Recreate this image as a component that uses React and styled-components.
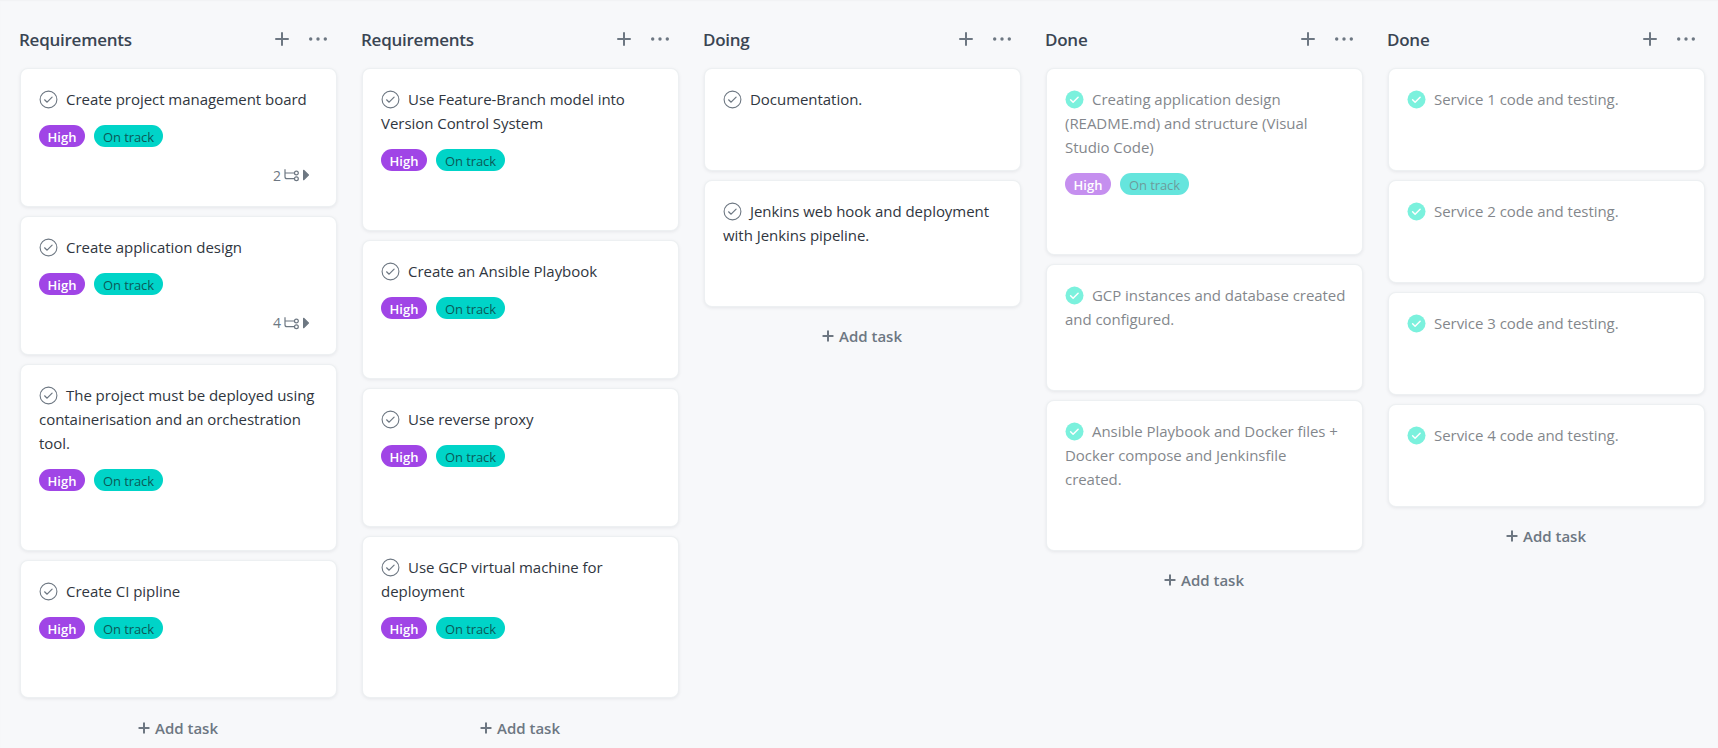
import React from "react";
import styled, { createGlobalStyle } from "styled-components";

const GlobalStyle = createGlobalStyle`
  * { box-sizing: border-box; }
  body {
    margin: 0;
    background: #f7f8fa;
    font-family: "Segoe UI", "Open Sans", "Noto Sans", sans-serif;
    color: #303640;
  }
`;

const Board = styled.main`
  display: flex;
  gap: 27px;
  height: 748px;
  padding: 19px 14px 0 21px;
  overflow: hidden;
  background: #f7f8fa;
  box-shadow: inset 0 1px 1px #f1f2f4;
`;

const Column = styled.section`
  flex: 0 0 315px;
  display: flex;
  flex-direction: column;
`;

const ColumnHeader = styled.header`
  display: flex;
  align-items: center;
  height: 40px;
  margin: 0 9px 10px -2px;
  color: #6d7782;
`;

const ColumnTitle = styled.h2`
  flex: 1;
  margin: 0;
  padding-top: 2px;
  font-size: 17px;
  font-weight: 600;
  line-height: 26px;
  letter-spacing: -0.25px;
  color: #3a4553;
`;

const HeaderIcon = styled.svg`
  width: 18px;
  height: 18px;
  margin-left: ${(p) => p.$gap || 0}px;
`;

const CardList = styled.div`
  display: flex;
  flex-direction: column;
  gap: 11px;
`;

const Card = styled.article`
  display: flex;
  flex-direction: column;
  min-height: 100.9px;
  padding: 18px 18px 58.85px;
  background: #fff;
  border-radius: 7px;
  box-shadow: 0 0 0 1px #edf0f2, 0 1px 4px rgba(21, 27, 38, 0.12);
`;

const Content = styled.div`
  opacity: ${(p) => (p.$done ? 0.6 : 1)};
`;

const Title = styled.p`
  margin: 0 -12px 0 0;
  font-size: 15px;
  font-weight: 400;
  line-height: 24px;
  letter-spacing: -0.04px;
  white-space: pre;
`;

const CheckSvg = styled.svg`
  width: 19px;
  height: 19px;
  margin-right: 8px;
  vertical-align: -4px;
`;

const Tags = styled.div`
  display: flex;
  gap: 9px;
  margin-top: 14px;
`;

const Tag = styled.span`
  width: ${(p) => (p.$priority ? 46 : 69)}px;
  height: 22px;
  border-radius: 11px;
  background: ${(p) => (p.$priority ? "#a045e6" : "#00d4c8")};
  color: ${(p) => (p.$priority ? "#fff" : "#0b5a58")};
  font-size: 13px;
  font-weight: ${(p) => (p.$priority ? 600 : 400)};
  line-height: 24px;
  letter-spacing: ${(p) => (p.$priority ? 0 : -0.1)}px;
  text-align: center;
`;

const Subtasks = styled.div`
  display: flex;
  align-items: center;
  justify-content: flex-end;
  gap: 2px;
  height: 22px;
  margin: 17px 9px -39px 0;
  color: #6d7782;
  font-size: 14px;
`;

const AddTask = styled.button`
  display: flex;
  align-items: center;
  justify-content: center;
  gap: 5px;
  height: 40px;
  margin: 10.5px 0 0;
  padding: 0 1px 0 0;
  border: 0;
  background: none;
  color: #6d7782;
  font: 600 15px/24px "Segoe UI", "Open Sans", "Noto Sans", sans-serif;
  letter-spacing: 0;
`;

const Check = ({ done }) => (
  <CheckSvg viewBox="0 0 19 19" fill="none">
    <circle cx="9.5" cy="9.5" r={done ? 9 : 8.4} fill={done ? "#25e8c8" : "none"} stroke={done ? "none" : "#6d7782"} strokeWidth="1.1" />
    <path d="M5.6 9.8l2.5 2.4 5-5" stroke={done ? "#fff" : "#6d7782"} strokeWidth={done ? 1.5 : 1.2} strokeLinecap="round" strokeLinejoin="round" />
  </CheckSvg>
);

const SubtaskIcon = () => (
  <svg width="26" height="14" viewBox="0 0 26 14" fill="none" stroke="#6d7782" strokeWidth="1.2">
    <path d="M2 1.3v7.4a2 2 0 0 0 2 2h7.4M2 5h9.4" />
    <circle cx="13.4" cy="5" r="1.9" />
    <circle cx="13.4" cy="10.7" r="1.9" />
    <path d="M20.6 2.3v9.4l4.8-4.7z" fill="#6d7782" strokeLinejoin="round" />
  </svg>
);

const columns = [
  { name: "Requirements", tasks: [
    { title: "Create project management board", tags: true, subtasks: 2 },
    { title: "Create application design", tags: true, subtasks: 4 },
    { title: "The project must be deployed using\ncontainerisation and an orchestration\ntool.", tags: true },
    { title: "Create CI pipline", tags: true },
  ] },
  { name: "Requirements", tasks: [
    { title: "Use Feature-Branch model into\nVersion Control System", tags: true },
    { title: "Create an Ansible Playbook", tags: true },
    { title: "Use reverse proxy", tags: true },
    { title: "Use GCP virtual machine for\ndeployment", tags: true },
  ] },
  { name: "Doing", tasks: [
    { title: "Documentation." },
    { title: "Jenkins web hook and deployment\nwith Jenkins pipeline." },
  ] },
  { name: "Done", done: true, tasks: [
    { title: "Creating application design\n(README.md) and structure (Visual\nStudio Code)", tags: true },
    { title: "GCP instances and database created\nand configured." },
    { title: "Ansible Playbook and Docker files +\nDocker compose and Jenkinsfile\ncreated." },
  ] },
  { name: "Done", done: true, tasks: [1, 2, 3, 4].map((n) => ({ title: `Service ${n} code and testing.` })) },
];

const TaskCard = ({ task, done }) => (
  <Card>
    <Content $done={done}>
      <Title><Check done={done} />{task.title}</Title>
      {task.tags && <Tags><Tag $priority>High</Tag><Tag>On track</Tag></Tags>}
      {task.subtasks && <Subtasks>{task.subtasks}<SubtaskIcon /></Subtasks>}
    </Content>
  </Card>
);

export default function App() {
  return (
    <>
      <GlobalStyle />
      <Board>
        {columns.map((col, i) => (
          <Column key={i}>
            <ColumnHeader>
              <ColumnTitle>{col.name}</ColumnTitle>
              <HeaderIcon viewBox="0 0 18 18" fill="none" stroke="currentColor" strokeWidth="2" strokeLinecap="round">
                <path d="M9 3v12M3 9h12" />
              </HeaderIcon>
              <HeaderIcon $gap={18} viewBox="0 0 18 18" fill="currentColor">
                <circle cx="1.7" cy="9" r="1.7" /><circle cx="9" cy="9" r="1.7" /><circle cx="16.3" cy="9" r="1.7" />
              </HeaderIcon>
            </ColumnHeader>
            <CardList>
              {col.tasks.map((task) => <TaskCard key={task.title} task={task} done={col.done} />)}
            </CardList>
            <AddTask>
              <svg width="12" height="12" viewBox="0 0 12 12" stroke="currentColor" strokeWidth="2" strokeLinecap="round"><path d="M6 1.3v9.4M1.3 6h9.4" /></svg>
              Add task
            </AddTask>
          </Column>
        ))}
      </Board>
    </>
  );
}
